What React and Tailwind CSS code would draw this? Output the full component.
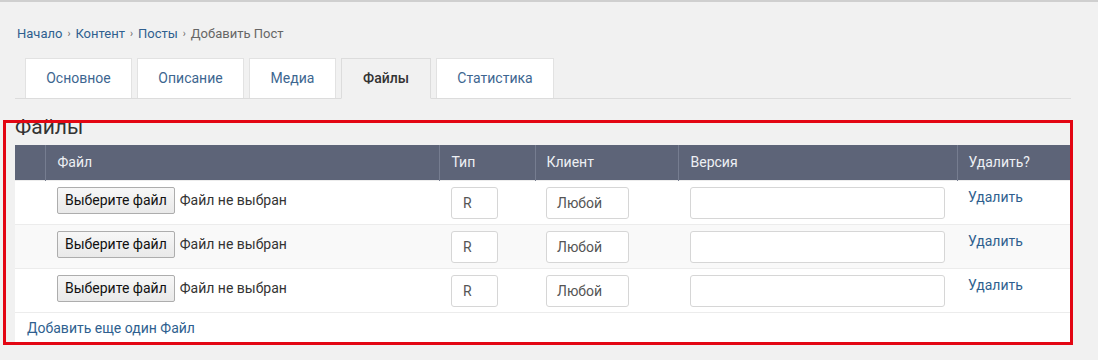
import React from 'react'

const tabs = [
  { label: 'Основное', w: 'w-[107px]' },
  { label: 'Описание', w: 'w-[107px]' },
  { label: 'Медиа', w: 'w-[87px]' },
  { label: 'Файлы', w: 'w-[90px]', active: true },
  { label: 'Статистика', w: 'w-[118px]' },
]
const rows = [0, 1, 2]

function FileRow({ striped }) {
  return (
    <tr className={striped ? 'bg-[#f9f9f9] border-t border-[#ececec]' : 'bg-white border-t border-[#ececec]'}>
      <td className="h-[44px]" />
      <td className="px-3 pt-[6px] pb-[6px] align-top">
        <div className="flex items-center gap-[5px] h-[27px]">
          <button className="h-[27px] px-[7px] border border-[#adadad] rounded-[2px] bg-gradient-to-b from-[#f7f7f7] to-[#e9e9e9] text-[14px] text-[#111]">
            Выберите файл
          </button>
          <span className="text-[14px] text-[#333]">Файл не выбран</span>
        </div>
      </td>
      <td className="px-3 pt-[6px] align-top">
        <div className="w-[47px] h-[32px] border border-[#d6d6d6] rounded-[3px] bg-white flex items-center px-[11px] text-[14px] text-[#555]">R</div>
      </td>
      <td className="px-[11px] pt-[6px] align-top">
        <div className="w-[83px] h-[32px] border border-[#d6d6d6] rounded-[3px] bg-white flex items-center px-[10px] text-[14px] text-[#555]">Любой</div>
      </td>
      <td className="px-3 pt-[6px] align-top">
        <div className="w-[255px] h-[32px] border border-[#d6d6d6] rounded-[3px] bg-white" />
      </td>
      <td className="px-[11px] pt-[4px] align-top">
        <a className="text-[14px] text-[#2f5f8f]">Удалить</a>
      </td>
    </tr>
  )
}

export default function App() {
  return (
    <div className="relative min-h-[360px] bg-[#f1f1f1] border-t-2 border-[#cfcfcf] font-['Roboto',sans-serif] pl-[15px] pr-[27px]">
      <nav className="pt-[22px] pl-[2px] flex items-center gap-[5px] text-[13px] text-[#666]">
        <a className="text-[#2f5f8f]">Начало</a>
        <span className="text-[10px]">›</span>
        <a className="text-[#2f5f8f]">Контент</a>
        <span className="text-[10px]">›</span>
        <a className="text-[#2f5f8f]">Посты</a>
        <span className="text-[10px]">›</span>
        <span>Добавить Пост</span>
      </nav>

      <ul className="mt-[14px] flex gap-[5px] pl-[10px] border-b border-[#dcdcdc]">
        {tabs.map((t) => (
          <li
            key={t.label}
            className={
              t.active
                ? `${t.w} h-[41px] -mb-px flex items-center justify-center border border-[#dcdcdc] border-b-[#f1f1f1] bg-[#f1f1f1] text-[14px] font-medium text-[#333]`
                : `${t.w} h-[40px] flex items-center justify-center bg-white border border-[#e2e2e2] border-b-0 text-[14px] text-[#3d6690]`
            }
          >
            {t.label}
          </li>
        ))}
      </ul>

      <h2 className="mt-[16px] text-[21px] leading-[24px] text-[#333]">Файлы</h2>

      <div className="mt-[6px] bg-white">
        <table className="w-full table-fixed border-collapse">
          <colgroup>
            <col className="w-[30px]" />
            <col className="w-[394px]" />
            <col className="w-[96px]" />
            <col className="w-[143px]" />
            <col className="w-[279px]" />
            <col />
          </colgroup>
          <thead>
            <tr className="bg-[#5d6478] h-[36px] text-left text-[14px] text-[#eef0f4]">
              <th className="font-normal" />
              <th className="font-normal px-3 border-l border-[#767d90]">Файл</th>
              <th className="font-normal px-3 border-l border-[#767d90]">Тип</th>
              <th className="font-normal px-[11px] border-l border-[#767d90]">Клиент</th>
              <th className="font-normal px-3 border-l border-[#767d90]">Версия</th>
              <th className="font-normal px-[11px] border-l border-[#767d90]">Удалить?</th>
            </tr>
          </thead>
          <tbody>
            {rows.map((r) => (
              <FileRow key={r} striped={r === 1} />
            ))}
            <tr className="border-t border-[#ececec]">
              <td colSpan={6} className="h-[29px] pl-[12px] pt-[2px] text-[14px] text-[#2f5f8f]">
                Добавить еще один Файл
              </td>
            </tr>
          </tbody>
        </table>
      </div>

      <div className="absolute left-[3px] top-[118px] w-[1070px] h-[225px] border-[3px] border-[#e30613] pointer-events-none" />
    </div>
  )
}
